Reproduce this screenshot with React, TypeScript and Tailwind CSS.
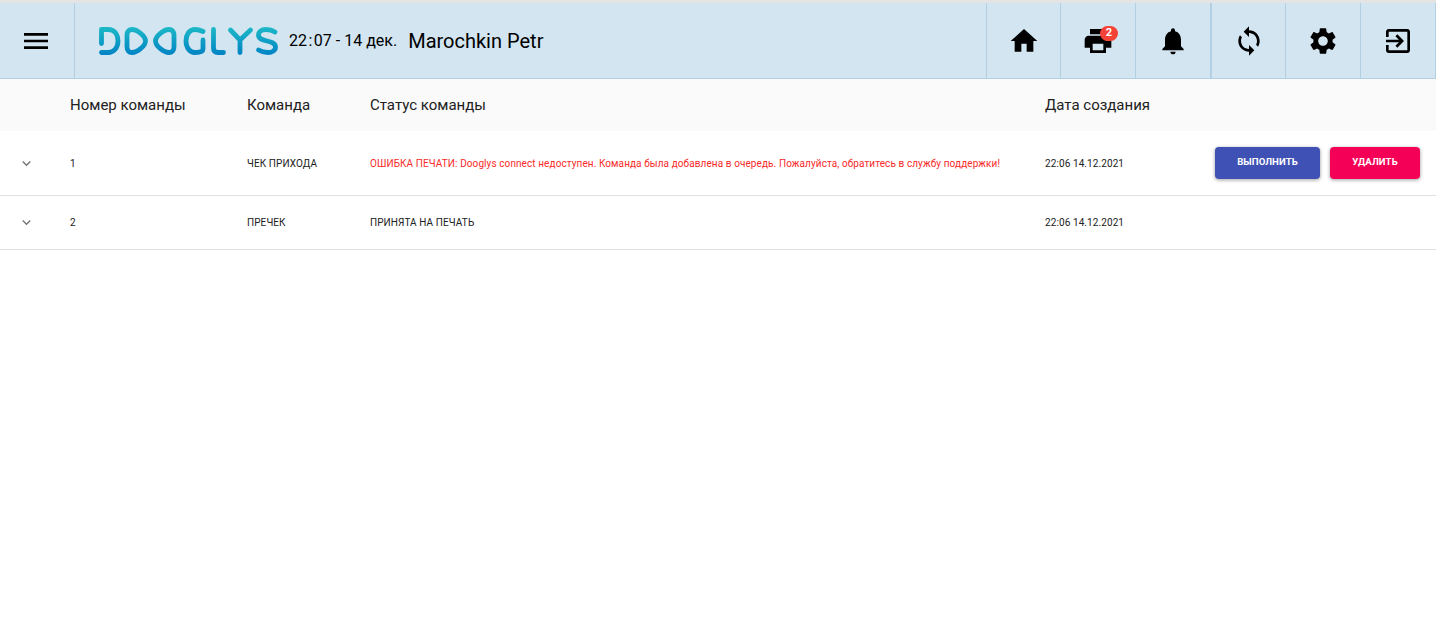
const icons = {
  home: "M10 20v-6h4v6h5v-8h3L12 3 2 12h3v8z",
  print:
    "M19 8H5c-1.66 0-3 1.34-3 3v6h4v4h12v-4h4v-6c0-1.66-1.34-3-3-3zm-3 11H8v-5h8v5zm3-7c-.55 0-1-.45-1-1s.45-1 1-1 1 .45 1 1-.45 1-1 1zm-1-9H6v4h12V3z",
  bell: "M12 22c1.1 0 2-.9 2-2h-4c0 1.1.89 2 2 2zm6-6v-5c0-3.07-1.64-5.64-4.5-6.32V4c0-.83-.67-1.5-1.5-1.5s-1.5.67-1.5 1.5v.68C7.63 5.36 6 7.92 6 11v5l-2 2v1h16v-1l-2-2z",
  sync: "M12 4V1L8 5l4 4V6c3.31 0 6 2.69 6 6 0 1.01-.25 1.97-.7 2.8l1.46 1.46C19.54 15.03 20 13.57 20 12c0-4.42-3.58-8-8-8zm0 14c-3.31 0-6-2.69-6-6 0-1.01.25-1.97.7-2.8L5.24 7.74C4.46 8.97 4 10.43 4 12c0 4.42 3.58 8 8 8v3l4-4-4-4v3z",
  settings:
    "M19.14 12.94c.04-.3.06-.61.06-.94 0-.32-.02-.64-.07-.94l2.03-1.58c.18-.14.23-.41.12-.61l-1.92-3.32c-.12-.22-.37-.29-.59-.22l-2.39.96c-.5-.38-1.03-.7-1.62-.94L14.4 2.81c-.04-.24-.24-.41-.48-.41h-3.84c-.24 0-.43.17-.47.41L9.25 5.35c-.59.24-1.13.57-1.62.94l-2.39-.96c-.22-.08-.47 0-.59.22L2.74 8.87c-.12.21-.08.47.12.61l2.03 1.58c-.05.3-.09.63-.09.94s.02.64.07.94l-2.03 1.58c-.18.14-.23.41-.12.61l1.92 3.32c.12.22.37.29.59.22l2.39-.96c.5.38 1.03.7 1.62.94l.36 2.54c.05.24.24.41.48.41h3.84c.24 0 .44-.17.47-.41l.36-2.54c.59-.24 1.13-.56 1.62-.94l2.39.96c.22.08.47 0 .59-.22l1.92-3.32c.12-.22.07-.47-.12-.61l-2.01-1.58zM12 15.6c-1.98 0-3.6-1.62-3.6-3.6s1.62-3.6 3.6-3.6 3.6 1.62 3.6 3.6-1.62 3.6-3.6 3.6z",
  exit: "M10.09 15.59L11.5 17l5-5-5-5-1.41 1.41L12.67 11H3v2h9.67l-2.58 2.59zM19 3H5c-1.11 0-2 .9-2 2v4h2V5h14v14H5v-4H3v4c0 1.1.89 2 2 2h14c1.1 0 2-.9 2-2V5c0-1.1-.9-2-2-2z",
  menu: "M3 18h18v-2H3v2zm0-5h18v-2H3v2zm0-7v2h18V6H3z",
  chevron: "M16.59 8.59L12 13.17 7.41 8.59 6 10l6 6 6-6z",
};

const Icon = ({ d, className }: { d: string; className?: string }) => (
  <svg viewBox="0 0 24 24" fill="currentColor" className={className}>
    <path d={d} />
  </svg>
);

const Logo = () => (
  <svg viewBox="0 0 182 30" width="182" height="30" fill="none" stroke="url(#logo-grad)" strokeWidth="4.8" strokeLinecap="round" strokeLinejoin="round">
    <defs>
      <linearGradient id="logo-grad" gradientUnits="userSpaceOnUse" x1="0" y1="1" x2="0" y2="29">
        <stop offset="0" stopColor="#1db9c6" />
        <stop offset="1" stopColor="#0083c4" />
      </linearGradient>
    </defs>
    <path d="M3.5 17.5V3.5H10C17.5 3.5 20 9.5 20 15C20 21.5 16 26.5 10 26.5H3.5" />
    <path d="M34 3.5C31 3.5 29 5.500 29 9V21C29 24.500 31 26.500 34 26.500C39 26.500 47.500 20 47.500 15C47.500 10 39 3.500 34 3.500Z" />
    <path d="M71 3.500C74 3.500 76 5.500 76 9V21C76 24.500 74 26.500 71 26.500C66 26.500 57.500 20 57.500 15C57.500 10 66 3.500 71 3.500Z" />
    <path d="M105 5.500C102 4 99.500 3.500 97 3.500C91 3.500 88 9 88 15C88 22 92 26.500 97 26.500C101 26.500 105 25.500 105 23V14" />
    <path d="M115.500 3.500V22C115.500 25 117 26.500 120 26.500H125.500" />
    <path d="M132.500 4L142 14L152.500 4M142 14V26.500" />
    <path d="M177 6C174 4 171 3.500 168 3.500C163 3.500 160.500 6 160.500 9C160.500 17 177.500 13 177.500 21C177.500 24.500 174 26.500 170 26.500C166 26.500 163 25.500 160.500 24" />
  </svg>
);

const navItems = [
  { d: icons.home },
  { d: icons.print, badge: 2 },
  { d: icons.bell },
  { d: icons.sync, thick: true },
  { d: icons.settings },
  { d: icons.exit },
];

const rowCols = "grid grid-cols-[70px_177px_123px_675px_1fr] items-center";

const Row = ({ num, cmd, status, error, actions }: { num: number; cmd: string; status: string; error?: boolean; actions?: boolean }) => (
  <div className={`${rowCols} border-b border-[#e0e0e0] text-[10px] tracking-[0.09px] text-[#212121] ${actions ? "h-[65px]" : "h-[54px]"}`}>
    <div className="pl-[18px] text-[#757575]">
      <Icon d={icons.chevron} className="w-[17px] h-[17px]" />
    </div>
    <div>{num}</div>
    <div>{cmd}</div>
    <div className={error ? "text-[#f82a2a]" : ""}>{status}</div>
    <div className="flex items-center justify-between pr-4">
      <span>22:06 14.12.2021</span>
      {actions && (
        <div className="flex gap-2.5 text-[9.6px] font-bold text-white tracking-[0.1px]">
          <button className="w-[105px] h-8 pb-px rounded bg-[#3f51b5] shadow-[0_1px_3px_1px_rgba(0,0,0,0.25)]">ВЫПОЛНИТЬ</button>
          <button className="w-[90px] h-8 pb-px rounded bg-[#f50057] shadow-[0_1px_3px_1px_rgba(0,0,0,0.25)]">УДАЛИТЬ</button>
        </div>
      )}
    </div>
  </div>
);

export default function App() {
  return (
    <div className="min-h-[618px] bg-white font-['Roboto',sans-serif]">
      {/* Top bar */}
      <header className="flex h-[79px] items-stretch border-t-[3px] border-b border-t-[#e4e4e4] border-b-[#b3cfe2] bg-[#d2e5f1] text-black">
        <div className="flex w-[75px] items-center justify-center border-r border-[#b3cfe2]">
          <Icon d={icons.menu} className="ml-[-2px] w-8 h-8" />
        </div>
        <div className="flex flex-1 items-center pl-[23px]">
          <Logo />
          <span className="ml-[9px] text-base">
            22<span className="mx-[1.5px]">:</span>07 - 14 дек.
          </span>
          <span className="ml-[11px] text-xl">Marochkin Petr</span>
        </div>
        {navItems.map((item, i) => (
          <div
            key={i}
            className={`relative flex w-[75px] items-center justify-center border-[#b3cfe2] ${i === 0 ? "border-x" : "border-r"} ${item.thick ? "border-l" : ""}`}
          >
            <Icon d={item.d} className="w-8 h-8" />
            {item.badge && (
              <span className="absolute left-[39px] top-[23px] flex h-[15px] w-[18px] items-center justify-center rounded-full bg-[#f44336] text-[11px] font-bold text-white">
                {item.badge}
              </span>
            )}
          </div>
        ))}
      </header>

      {/* Table head */}
      <div className={`${rowCols} h-[52px] bg-[#fafafa] text-[15px] text-[#212121]`}>
        <div />
        <div>Номер команды</div>
        <div>Команда</div>
        <div>Статус команды</div>
        <div>Дата создания</div>
      </div>

      <Row
        num={1}
        cmd="ЧЕК ПРИХОДА"
        status="ОШИБКА ПЕЧАТИ: Dooglys connect недоступен. Команда была добавлена в очередь. Пожалуйста, обратитесь в службу поддержки!"
        error
        actions
      />
      <Row num={2} cmd="ПРЕЧЕК" status="ПРИНЯТА НА ПЕЧАТЬ" />
    </div>
  );
}
